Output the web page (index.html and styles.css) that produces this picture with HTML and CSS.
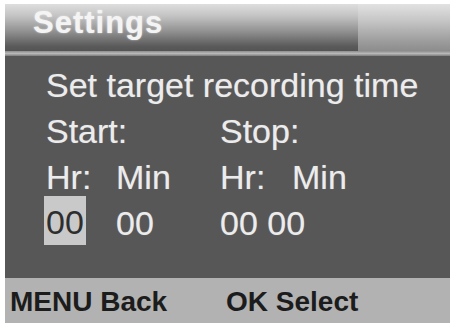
FILE: index.html
```html
<!DOCTYPE html>
<html>
<head>
<meta charset="utf-8">
<link rel="stylesheet" href="styles.css">
</head>
<body>
<div class="screen">
  <div class="header">
    <div class="title">Settings</div>
    <div class="header-right"></div>
  </div>
  <div class="separator"></div>
  <div class="content">
    <div class="full">Set target recording time</div>
    <div class="c1">Start:</div>
    <div class="c3">Stop:</div>
    <div class="c1">Hr:</div>
    <div>Min</div>
    <div>Hr:</div>
    <div>Min</div>
    <div class="c1"><span class="sel">00</span></div>
    <div>00</div>
    <div class="c34">00 00</div>
  </div>
  <div class="footer">
    <div>MENU Back</div>
    <div>OK Select</div>
  </div>
</div>
</body>
</html>
```
FILE: styles.css
```css
html, body {
  margin: 0;
  padding: 0;
  background: #ffffff;
}
body {
  width: 453px;
  height: 325px;
  overflow: hidden;
  font-family: "Liberation Sans", Arial, sans-serif;
}
.screen {
  margin: 4px 3px 2px 5px;
  width: 445px;
  height: 319px;
  display: flex;
  flex-direction: column;
  background: #575757;
}
.header {
  height: 47px;
  display: flex;
  background: linear-gradient(#dedede 0%, #c4c4c4 25%, #8e8e8e 60%, #5a5a5a 90%, #545454 100%);
}
.title {
  flex: 1;
  padding-left: 28px;
  font-weight: bold;
  font-size: 31px;
  letter-spacing: 1px;
  line-height: 37px;
  color: #f4f4f4;
  text-shadow: 0 0 2px rgba(255,255,255,0.6);
}
.header-right {
  width: 92px;
  background: linear-gradient(#e2e2e2 0%, #c6c6c6 35%, #a0a0a0 75%, #8c8c8c 100%);
}
.separator {
  height: 5px;
  background: linear-gradient(#8e8e8e, #b8b8b8 50%, #7e7e7e);
}
.content {
  flex: 1;
  padding: 6px 0 0 41px;
  display: grid;
  grid-template-columns: 70px 104px 72px 1fr;
  grid-auto-rows: 46px;
  align-content: start;
  font-size: 34px;
  line-height: 46px;
  color: #ececec;
  text-shadow: 0 0 1px rgba(255,255,255,0.4);
}
.full {
  grid-column: 1 / -1;
}
.c1 {
  grid-column: 1;
}
.c3 {
  grid-column: 3;
}
.c34 {
  grid-column: 3 / 5;
}
.sel {
  display: inline-block;
  margin: -4px 0 0 -2px;
  padding: 4px 2px 1px 2px;
  line-height: 44px;
  background: #c9c9c9;
  color: #2e2e2e;
  text-shadow: none;
  vertical-align: top;
}
.footer {
  height: 45px;
  box-sizing: border-box;
  padding: 3px 0 0 5px;
  display: grid;
  grid-template-columns: 216px auto;
  background: #b2b2b2;
  font-weight: bold;
  font-size: 28px;
  line-height: 42px;
  color: #1c1c1c;
}
```
